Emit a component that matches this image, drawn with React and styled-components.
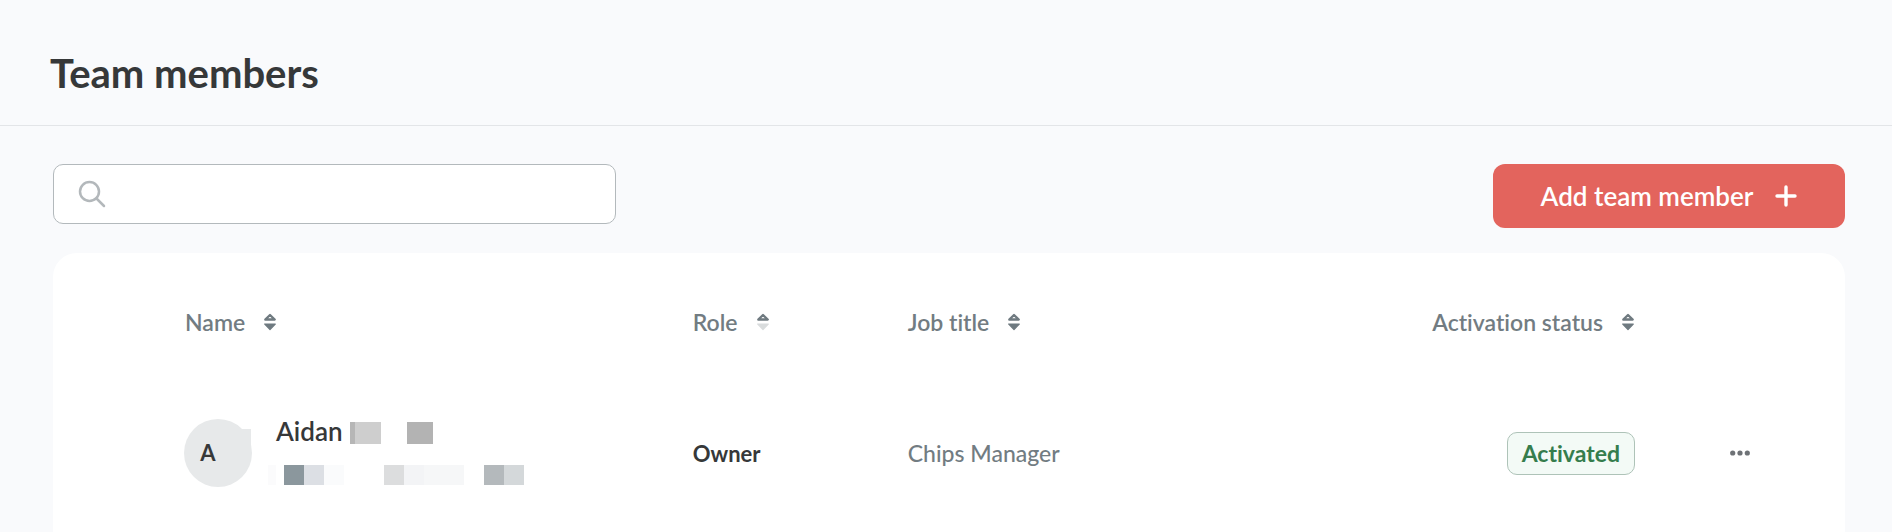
import React from "react";
import styled, { createGlobalStyle } from "styled-components";

const columns = [
  { title: "Name", key: "name" },
  { title: "Role", key: "role", sorted: true },
  { title: "Job title", key: "job" },
  { title: "Activation status", key: "status" },
];

// pixelated blocks that hide the surname and the email
const surnameBlocks = [
  { width: 5, color: "#b6b6b6" },
  { width: 26, color: "#cecece" },
  { width: 26, color: "transparent" },
  { width: 26, color: "#b3b3b3" },
];

const emailBlocks = [
  { width: 8, color: "#fbfbfc" },
  { width: 8, color: "transparent" },
  { width: 20, color: "#8b979d" },
  { width: 20, color: "#dcdfe4" },
  { width: 20, color: "#fafbfc" },
  { width: 40, color: "transparent" },
  { width: 20, color: "#dcddde" },
  { width: 20, color: "#f3f4f6" },
  { width: 40, color: "#f6f7f8" },
  { width: 20, color: "transparent" },
  { width: 20, color: "#b4b9bc" },
  { width: 20, color: "#d4d8da" },
];

const SortIcon = ({ sorted }) => (
  <svg width="14" height="18" viewBox="0 0 14 18" aria-hidden="true">
    <path
      d="M7 2L11.7 6.5H2.3Z"
      fill="none"
      stroke="#6f7a80"
      strokeWidth="2.4"
      strokeLinejoin="round"
    />
    <path
      d="M1.7 11H12.3L7 16.5Z"
      fill={sorted ? "#d9dcdd" : "#6f7a80"}
      stroke={sorted ? "#d9dcdd" : "#6f7a80"}
      strokeWidth="1.2"
      strokeLinejoin="round"
    />
  </svg>
);

const Blocks = ({ items, height }) => (
  <BlockRow aria-hidden="true">
    {items.map((item, ind) => (
      <Block key={ind} $width={item.width} $height={height} $color={item.color} />
    ))}
  </BlockRow>
);

const App = () => {
  return (
    <>
      <GlobalStyle />
      <Header>
        <Title>Team members</Title>
      </Header>
      <Main>
        <Toolbar>
          <SearchBox>
            <svg width="28" height="28" viewBox="0 0 28 28" aria-hidden="true">
              <g fill="none" stroke="#b3b8bb" strokeWidth="2.5" strokeLinecap="round">
                <circle cx="11.5" cy="11.5" r="9.5" />
                <path d="M18.5 18.5L26 26" />
              </g>
            </svg>
            <SearchInput type="search" aria-label="Search team members" />
          </SearchBox>
          <AddButton type="button">
            Add team member
            <svg width="22" height="22" viewBox="0 0 22 22" aria-hidden="true">
              <path d="M11 2V20M2 11H20" stroke="#fff" strokeWidth="3.4" strokeLinecap="round" />
            </svg>
          </AddButton>
        </Toolbar>
        <Card>
          <Table>
            <thead>
              <tr>
                {columns.map((col) => (
                  <HeadCell key={col.key} $col={col.key} scope="col">
                    <SortButton type="button">
                      {col.title}
                      <SortIcon sorted={col.sorted} />
                    </SortButton>
                  </HeadCell>
                ))}
                <HeadCell as="td" $col="actions" />
              </tr>
            </thead>
            <tbody>
              <tr>
                <Cell $col="name">
                  <Member>
                    <Avatar>A</Avatar>
                    <MemberInfo>
                      <NameLine>
                        Aidan
                        <Blocks items={surnameBlocks} height={22} />
                      </NameLine>
                      <EmailLine>
                        <Blocks items={emailBlocks} height={20} />
                      </EmailLine>
                    </MemberInfo>
                  </Member>
                </Cell>
                <Cell $col="role">
                  <Role>Owner</Role>
                </Cell>
                <Cell $col="job">Chips Manager</Cell>
                <Cell $col="status">
                  <Badge>Activated</Badge>
                </Cell>
                <Cell $col="actions">
                  <MoreButton type="button" aria-label="More actions">
                    <svg width="20" height="6" viewBox="0 0 20 6" aria-hidden="true">
                      <g fill="#6e7276">
                        <circle cx="2.7" cy="3" r="2.6" />
                        <circle cx="10" cy="3" r="2.6" />
                        <circle cx="17.3" cy="3" r="2.6" />
                      </g>
                    </svg>
                  </MoreButton>
                </Cell>
              </tr>
            </tbody>
          </Table>
        </Card>
      </Main>
    </>
  );
};

export default App;

const GlobalStyle = createGlobalStyle`
  * {
    box-sizing: border-box;
  }
  body {
    margin: 0;
    background: #f9fafc;
    color: #363839;
    font-family: Lato, "Open Sans", sans-serif;
    font-size: 23px;
    line-height: 28px;
    font-variant-ligatures: none;
  }
  button, input {
    font: inherit;
    font-variant-ligatures: none;
    color: inherit;
    border: 0;
    padding: 0;
    background: none;
  }
  svg {
    display: block;
    flex-shrink: 0;
  }
`;

const Header = styled.header`
  padding: 49px 50px 28px;
  border-bottom: 1px solid #e3e5e8;
`;

const Title = styled.h1`
  margin: 0;
  font-size: 40px;
  line-height: 48px;
  font-weight: 700;
`;

const Main = styled.main`
  padding: 38px 47px 0 53px;
`;

const Toolbar = styled.div`
  display: flex;
  justify-content: space-between;
  align-items: flex-start;
  gap: 24px;
`;

const SearchBox = styled.label`
  display: flex;
  align-items: center;
  gap: 16px;
  width: 563px;
  height: 60px;
  padding: 0 24px;
  background: #fff;
  border: 1px solid #b3b9bc;
  border-radius: 10px;
`;

const SearchInput = styled.input`
  flex: 1;
  min-width: 0;
  outline: none;
`;

const AddButton = styled.button`
  display: flex;
  align-items: center;
  justify-content: center;
  gap: 22px;
  width: 352px;
  height: 64px;
  background: #e3645d;
  border-radius: 12px;
  color: #fff;
  font-size: 26px;
  font-weight: 600;
`;

const Card = styled.section`
  margin-top: 25px;
  padding-bottom: 13px;
  background: #fff;
  border-radius: 24px 24px 0 0;
`;

const Table = styled.table`
  width: 100%;
  table-layout: fixed;
  border-collapse: collapse;
`;

const widths = {
  name: "35.7%",
  role: "12%",
  job: "auto",
  status: "280px",
  actions: "210px",
};

const HeadCell = styled.th`
  width: ${({ $col }) => widths[$col]};
  height: 134px;
  padding: 0 0 0 ${({ $col }) => ($col === "name" ? "132px" : "0")};
  text-align: ${({ $col }) => ($col === "status" ? "right" : "left")};
  color: #727c82;
  font-weight: 600;
`;

const SortButton = styled.button`
  display: inline-flex;
  align-items: center;
  gap: 18px;
  vertical-align: middle;
  white-space: nowrap;
`;

const Cell = styled.td`
  height: 132px;
  padding: 0 0 0 ${({ $col }) =>
    $col === "name" ? "131px" : $col === "actions" ? "95px" : "0"};
  text-align: ${({ $col }) => ($col === "status" ? "right" : "left")};
  color: #727c82;
  font-weight: 500;
`;

const Member = styled.div`
  display: flex;
  align-items: center;
  gap: 16px;
`;

const Avatar = styled.div`
  position: relative;
  display: flex;
  align-items: center;
  justify-content: center;
  width: 68px;
  height: 68px;
  padding-right: 20px;
  border-radius: 50%;
  background: #e7e9ea;
  color: #363839;
  font-size: 22px;
  font-weight: 700;

  /* squared shoulder on the right side of the circle */
  &::after {
    content: "";
    position: absolute;
    top: 10px;
    right: 1px;
    width: 12px;
    height: 26px;
    background: #e7e9ea;
  }
`;

const MemberInfo = styled.div`
  display: flex;
  flex-direction: column;
  gap: 18px;
  padding-bottom: 2px;
`;

const NameLine = styled.div`
  display: flex;
  align-items: flex-start;
  gap: 7px;
  height: 28px;
  padding-left: 8px;
  color: #363839;
  font-size: 26px;
  line-height: 24px;
  font-weight: 600;

  & > span {
    padding-top: 3px;
  }
`;

const EmailLine = styled.div`
  display: flex;
`;

const BlockRow = styled.span`
  display: flex;
`;

const Block = styled.span`
  width: ${({ $width }) => $width}px;
  height: ${({ $height }) => $height}px;
  background: ${({ $color }) => $color};
`;

const Role = styled.span`
  color: #363839;
  font-size: 22px;
  font-weight: 700;
`;

const Badge = styled.span`
  display: inline-block;
  padding: 6px 14px 7px;
  border: 1px solid #aec3b8;
  border-radius: 10px;
  background: #f3faf6;
  color: #357d4d;
  font-weight: 700;
`;

const MoreButton = styled.button`
  display: flex;
  align-items: center;
  height: 28px;
`;
